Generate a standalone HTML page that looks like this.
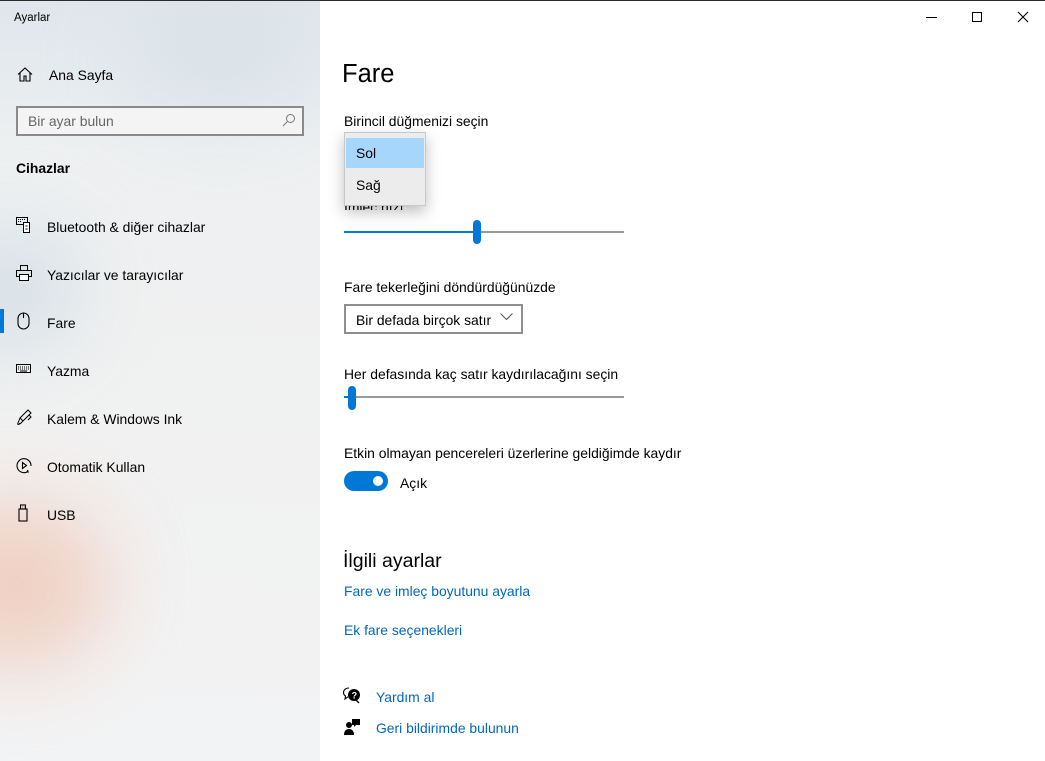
<!DOCTYPE html>
<html><head><meta charset="utf-8"><style>
*{margin:0;padding:0;box-sizing:border-box}
body{width:1045px;height:761px;overflow:hidden;font-family:"Liberation Sans",sans-serif;font-size:13.9px;color:#000;position:relative;background:#fff}
.a{position:absolute;white-space:nowrap;line-height:22px}
#side{position:absolute;left:0;top:0;width:320px;height:761px;overflow:hidden;
background:linear-gradient(180deg,#dfe6ec 0%,#eef0f1 20%,#f1f1f1 60%,#f2f3f4 100%)}
.blob{position:absolute;border-radius:50%;filter:blur(40px)}
.ic{position:absolute}
.link{color:#0067c0}
</style></head><body>
<div id="side">
<div class="blob" style="left:-80px;top:500px;width:190px;height:170px;background:#f0cbbb;opacity:.85"></div>
<div class="blob" style="left:-60px;top:230px;width:140px;height:120px;background:#cfdbe3;opacity:.8"></div>
<div class="blob" style="left:120px;top:0px;width:200px;height:120px;background:#d7e1e8;opacity:.8"></div>
</div>
<div style="position:absolute;left:0;top:0;width:1045px;height:1px;background:#2b2b2b"></div>
<div class="a" style="left:14px;top:7px;font-size:11.5px">Ayarlar</div>

<svg class="ic" style="left:17px;top:67px" width="16" height="15" viewBox="0 0 16 15" fill="none" stroke="#000" stroke-width="1.1"><path d="M1 7.5L8 1l7 6.5M3 6v8h4v-5h2v5h4V6"/></svg>
<div class="a" style="left:49px;top:64px">Ana Sayfa</div>

<div style="position:absolute;left:16px;top:106px;width:288px;height:30px;border:2px solid #8a8a8a;background:#f4f4f4"></div>
<div class="a" style="left:28px;top:110px;color:#666">Bir ayar bulun</div>
<svg class="ic" style="left:282px;top:113px" width="14" height="14" viewBox="0 0 14 14" fill="none" stroke="#777" stroke-width="1"><circle cx="8.5" cy="5.5" r="4"/><path d="M5.5 8.5L1 13"/></svg>

<div class="a" style="left:16px;top:157px;font-weight:bold">Cihazlar</div>

<svg class="ic" style="left:16px;top:217px" width="16" height="16" viewBox="0 0 16 16" fill="none" stroke="#000" stroke-width="1"><rect x="0.5" y="0.5" width="11" height="7"/><rect x="7.5" y="5.5" width="6" height="10" fill="#fff"/><path d="M2 2.5h1M4 2.5h1M6 2.5h1M8 2.5h1M2 4.5h1M4 4.5h1M9.5 9h2M9.5 12h2"/></svg>
<div class="a" style="left:47px;top:216px">Bluetooth &amp; diğer cihazlar</div>

<svg class="ic" style="left:16px;top:265px" width="16" height="16" viewBox="0 0 16 16" fill="none" stroke="#000" stroke-width="1"><rect x="4.5" y="0.5" width="7" height="5"/><rect x="0.5" y="5.5" width="15" height="6"/><rect x="3.5" y="9.5" width="9" height="6" fill="#fff"/></svg>
<div class="a" style="left:47px;top:264px">Yazıcılar ve tarayıcılar</div>

<div style="position:absolute;left:0;top:309px;width:4px;height:24px;background:#0078d7"></div>
<svg class="ic" style="left:17px;top:312px" width="14" height="18" viewBox="0 0 14 18" fill="none" stroke="#000" stroke-width="1.1"><rect x="1" y="1" width="11" height="16" rx="5.5"/><path d="M6.5 1v5"/></svg>
<div class="a" style="left:47px;top:312px">Fare</div>

<svg class="ic" style="left:16px;top:364px" width="16" height="10" viewBox="0 0 16 10" fill="none" stroke="#000" stroke-width="1"><rect x="0.5" y="0.5" width="14" height="8"/><path d="M2 3h1M4 3h1M6 3h1M8 3h1M10 3h1M12 3h1M2 5h1M4 5h1M6 5h1M8 5h1M10 5h1M12 5h1M4 7h7"/></svg>
<div class="a" style="left:47px;top:360px">Yazma</div>

<svg class="ic" style="left:16px;top:409px" width="17" height="17" viewBox="0 0 17 17" fill="none" stroke="#000" stroke-width="1"><path d="M12 1l3 3-8 8-3-3zM4 9l-2 5M7 12l-3 3M13 6l2 2-3 3M2 14c-1 2 1 2 2 0"/></svg>
<div class="a" style="left:47px;top:408px">Kalem &amp; Windows Ink</div>

<svg class="ic" style="left:16px;top:457px" width="17" height="17" viewBox="0 0 17 17" fill="none" stroke="#000" stroke-width="1.1"><path d="M11 15A7 7 0 1 1 15 9"/><path d="M13 15l-2 0 1-2"/><path d="M6.5 5.5v6l4-3z"/></svg>
<div class="a" style="left:47px;top:456px">Otomatik Kullan</div>

<svg class="ic" style="left:18px;top:504px" width="10" height="18" viewBox="0 0 10 18" fill="none" stroke="#000" stroke-width="1.1"><rect x="1" y="5" width="8" height="12"/><rect x="2.5" y="1" width="5" height="4"/><path d="M4 3h0.5M6 3h0.5"/></svg>
<div class="a" style="left:47px;top:504px">USB</div>

<div style="position:absolute;left:926px;top:17px;width:11px;height:1px;background:#000"></div>
<div style="position:absolute;left:972px;top:12px;width:10px;height:10px;border:1px solid #000"></div>
<svg class="ic" style="left:1017px;top:11px" width="12" height="12" viewBox="0 0 12 12" stroke="#000" stroke-width="1.1"><path d="M1 1l10 10M11 1L1 11"/></svg>

<div class="a" style="left:342px;top:57px;font-size:25.5px;line-height:34px">Fare</div>
<div class="a" style="left:344px;top:110px">Birincil düğmenizi seçin</div>

<div class="a" style="left:344px;top:196px;height:14px;overflow:hidden">İmleç hızı</div>
<div style="position:absolute;left:344px;top:231px;width:134px;height:2px;background:#0078d7"></div>
<div style="position:absolute;left:478px;top:231px;width:146px;height:2px;background:#999"></div>
<div style="position:absolute;left:473px;top:220px;width:8px;height:24px;border-radius:4px;background:#0078d7"></div>

<div style="position:absolute;left:344px;top:132px;width:82px;height:74px;background:#ececec;border:1px solid #c8c8c8;box-shadow:0 6px 14px rgba(0,0,0,.25)"></div>
<div style="position:absolute;left:346px;top:138px;width:78px;height:30px;background:#a6d6fb"></div>
<div class="a" style="left:356px;top:142px">Sol</div>
<div class="a" style="left:356px;top:174px">Sağ</div>

<div class="a" style="left:344px;top:276px">Fare tekerleğini döndürdüğünüzde</div>
<div style="position:absolute;left:344px;top:304px;width:179px;height:30px;border:2px solid #8f8f8f;background:#fff"></div>
<div class="a" style="left:356px;top:309px">Bir defada birçok satır</div>
<svg class="ic" style="left:500px;top:313px" width="13" height="8" viewBox="0 0 13 8" fill="none" stroke="#555" stroke-width="1"><path d="M0.5 0.5l6 6 6-6"/></svg>

<div class="a" style="left:344px;top:363px">Her defasında kaç satır kaydırılacağını seçin</div>
<div style="position:absolute;left:344px;top:396px;width:280px;height:2px;background:#999"></div>
<div style="position:absolute;left:344px;top:396px;width:6px;height:2px;background:#0078d7"></div>
<div style="position:absolute;left:348px;top:386px;width:8px;height:24px;border-radius:4px;background:#0078d7"></div>

<div class="a" style="left:344px;top:442px">Etkin olmayan pencereleri üzerlerine geldiğimde kaydır</div>
<div style="position:absolute;left:344px;top:471px;width:44px;height:20px;border-radius:10px;background:#0078d7"></div>
<div style="position:absolute;left:373px;top:476px;width:10px;height:10px;border-radius:50%;background:#fff"></div>
<div class="a" style="left:400px;top:472px">Açık</div>

<div class="a" style="left:343px;top:547px;font-size:19.5px;line-height:28px">İlgili ayarlar</div>
<div class="a link" style="left:344px;top:580px">Fare ve imleç boyutunu ayarla</div>
<div class="a link" style="left:344px;top:619px">Ek fare seçenekleri</div>

<svg class="ic" style="left:343px;top:687px" width="18" height="17" viewBox="0 0 18 17"><path d="M6 1C2.5 1 0.5 3 0.5 5.5c0 1.5 .8 2.7 2 3.5L2 12l3-2.3" fill="none" stroke="#000" stroke-width="1.1"/><circle cx="11" cy="8" r="6" fill="#000"/><path d="M13 13l3 3" stroke="#000" stroke-width="1.3"/><text x="8.6" y="11.5" font-size="9" font-weight="bold" fill="#fff" font-family="Liberation Sans">?</text></svg>
<div class="a link" style="left:376px;top:686px">Yardım al</div>

<svg class="ic" style="left:344px;top:718px" width="16" height="17" viewBox="0 0 16 17" fill="#000"><circle cx="5" cy="7" r="3"/><path d="M0 17c0-4 2-6 5-6s5 2 5 6z"/><path d="M8 1h8v6h-4l-2 2V7H8z"/></svg>
<div class="a link" style="left:376px;top:717px">Geri bildirimde bulunun</div>
</body></html>
